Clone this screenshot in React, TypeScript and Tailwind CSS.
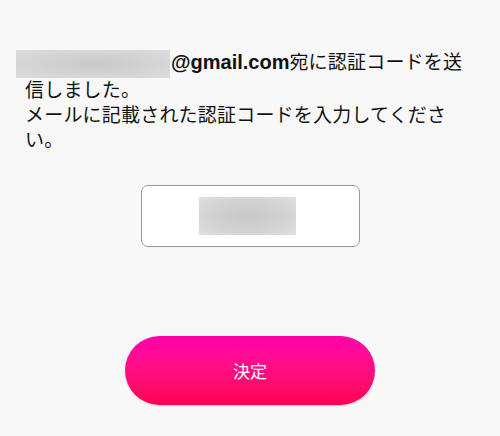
export default function App() {
  return (
    <div
      className="w-[500px] h-[436px] bg-[#f8f8f8] text-[#111] overflow-hidden"
      style={{ fontFamily: '"Noto Sans CJK JP", "Noto Sans", sans-serif' }}
    >
      {/* メッセージ */}
      <p className="pl-[25px] pt-[48px] w-[470px] text-[19px] leading-[25px] tracking-[0.2px]">
        <span className="inline-block align-middle -ml-[9px] mr-[1px] w-[154px] h-[28px] -my-[2px] bg-[radial-gradient(ellipse_at_center,#c9c9c9_0%,#d3d3d3_50%,#dcdcdc_100%)]" />
        <span className="font-bold font-['Liberation_Sans'] text-[20px] tracking-[0px]">@gmail.com</span>
        宛に認証コードを送信しました。
        <br />
        メールに記載された認証コードを入力してください。
      </p>

      {/* コード入力 */}
      <div className="flex justify-center mt-[34px]">
        <div className="w-[219px] h-[62px] bg-white border border-[#9a9a9a] rounded-[7px] flex items-center justify-center">
          <div className="w-[97px] h-[38px] -ml-[6px] bg-[radial-gradient(ellipse_at_center,#c8c8c8_0%,#d2d2d2_55%,#e0e0e0_100%)]" />
        </div>
      </div>

      {/* 決定ボタン */}
      <div className="flex justify-center mt-[89px]">
        <button className="w-[250px] h-[69px] rounded-full bg-gradient-to-b from-[#ff00aa] to-[#ff0052] text-white text-[17px] shadow-[0_1px_2px_rgba(0,0,0,0.15)]">
          決定
        </button>
      </div>
    </div>
  );
}
